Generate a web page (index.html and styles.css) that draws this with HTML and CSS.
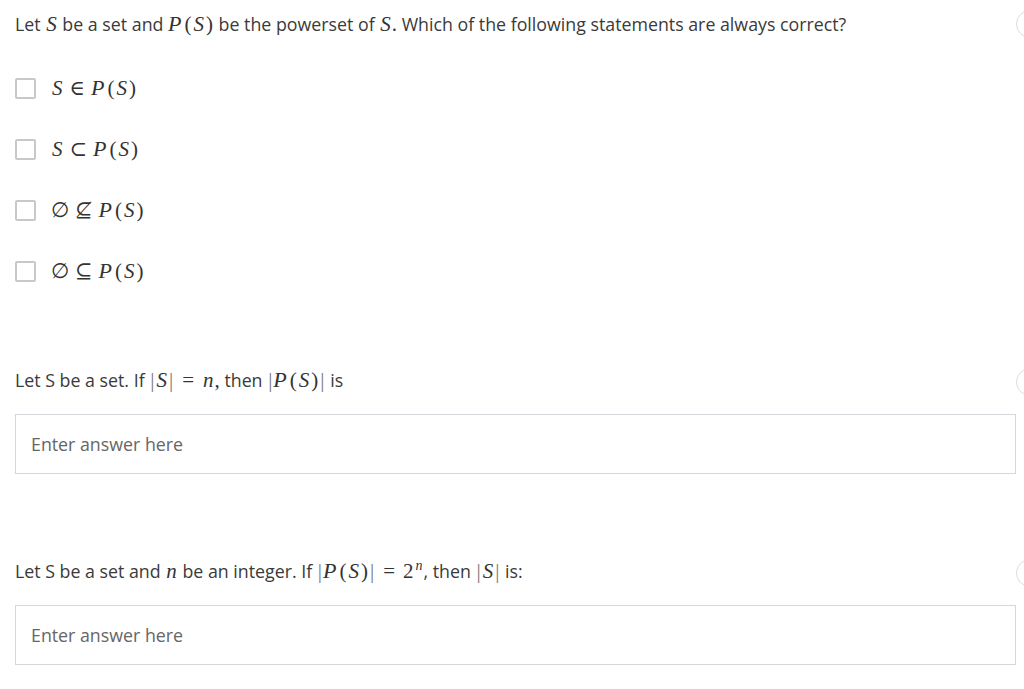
FILE: index.html
```html
<!DOCTYPE html>
<html>
<head>
<meta charset="utf-8">
<link rel="stylesheet" href="styles.css">
</head>
<body>
<div class="page">
  <section class="question q1">
    <div class="body">
      <p class="prompt">Let <span class="m"><i>S</i></span> be a set and <span class="m"><span class="cal">P</span><span class="paren">(</span><i>S</i><span class="paren">)</span></span> be the powerset of <span class="m"><i>S</i>.</span> Which of the following statements are always correct?</p>
      <ul class="options">
        <li class="option"><span class="box"></span><span class="m"><i>S</i><span class="op">∈</span><span class="cal">P</span><span class="paren">(</span><i>S</i><span class="paren">)</span></span></li>
        <li class="option"><span class="box"></span><span class="m"><i>S</i><span class="op">⊂</span><span class="cal">P</span><span class="paren">(</span><i>S</i><span class="paren">)</span></span></li>
        <li class="option"><span class="box"></span><span class="m">∅<span class="op">⊈</span><span class="cal">P</span><span class="paren">(</span><i>S</i><span class="paren">)</span></span></li>
        <li class="option"><span class="box"></span><span class="m">∅<span class="op">⊆</span><span class="cal">P</span><span class="paren">(</span><i>S</i><span class="paren">)</span></span></li>
      </ul>
    </div>
    <span class="status"></span>
  </section>
  <section class="question q2">
    <div class="body">
      <p class="prompt">Let S be a set. If <span class="m"><span class="bar">|</span><i>S</i><span class="bar">|</span><span class="op wide">=</span><i>n</i>,</span> then <span class="m"><span class="bar">|</span><span class="cal">P</span><span class="paren">(</span><i>S</i><span class="paren">)</span><span class="bar">|</span></span> is</p>
      <div class="answer">Enter answer here</div>
    </div>
    <span class="status"></span>
  </section>
  <section class="question q3">
    <div class="body">
      <p class="prompt">Let S be a set and <span class="m"><i>n</i></span> be an integer. If <span class="m"><span class="bar">|</span><span class="cal">P</span><span class="paren">(</span><i>S</i><span class="paren">)</span><span class="bar">|</span><span class="op wide">=</span>2<sup><i>n</i></sup></span>, then <span class="m"><span class="bar">|</span><i>S</i><span class="bar">|</span></span> is:</p>
      <div class="answer">Enter answer here</div>
    </div>
    <span class="status"></span>
  </section>
</div>
</body>
</html>
```
FILE: styles.css
```css
html, body {
  margin: 0;
  padding: 0;
  background: #fff;
  overflow: hidden;
}
body {
  font-family: "Open Sans", "Liberation Sans", sans-serif;
  font-size: 17.8px;
  color: #3a3a3a;
}
.page {
  padding: 0 0 0 15px;
  width: 1001px;
}
.question {
  display: grid;
  grid-template-columns: 1001px 28px;
  align-items: start;
}
.prompt {
  margin: 0;
  line-height: 24px;
}
.q1 { padding-top: 12px; }
.q2 { padding-top: 86px; }
.q3 { padding-top: 85px; }
.m {
  font-family: "Liberation Serif", "DejaVu Serif", serif;
  font-size: 21px;
  color: #333;
}
.m i { font-style: italic; padding: 0 1px; }
.cal {
  font-family: "Liberation Serif", "DejaVu Serif", serif;
  font-style: italic;
  font-size: 22px;
  padding-right: 2px;
}
.paren { padding: 0 1px; }
.bar { color: #777; padding: 0 1px; }
.op { padding: 0 6px; }
.op.wide { padding: 0 8px; }
sup { font-size: 14px; line-height: 0; padding-left: 1px; }
.options {
  list-style: none;
  margin: 0;
  padding: 41px 0 0 0;
  display: flex;
  flex-direction: column;
  gap: 39px;
}
.option {
  display: flex;
  align-items: center;
  gap: 15px;
  height: 22px;
}
.box {
  width: 17px;
  height: 17px;
  border: 2px solid #c8c8c8;
  border-radius: 2px;
  flex: none;
}
.status {
  width: 26px;
  height: 26px;
  border: 1px solid #dcdcdc;
  border-radius: 50%;
}
.q1 .status { margin-top: -2px; }
.answer {
  margin-top: 22px;
  border: 1px solid #d4d8dc;
  box-sizing: border-box;
  height: 60px;
  padding: 0 15px;
  display: flex;
  align-items: center;
  color: #666;
}
```
